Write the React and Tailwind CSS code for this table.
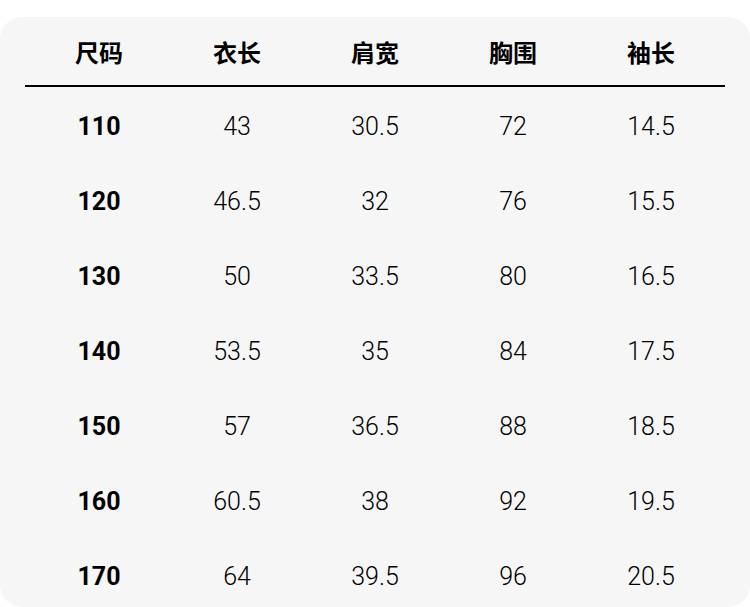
const headers = ['尺码', '衣长', '肩宽', '胸围', '袖长'];

const rows = [
  ['110', '43', '30.5', '72', '14.5'],
  ['120', '46.5', '32', '76', '15.5'],
  ['130', '50', '33.5', '80', '16.5'],
  ['140', '53.5', '35', '84', '17.5'],
  ['150', '57', '36.5', '88', '18.5'],
  ['160', '60.5', '38', '92', '19.5'],
  ['170', '64', '39.5', '96', '20.5'],
];

const App = () => {
  return (
    <div className="w-[750px] h-[607px] bg-white pt-[17px] overflow-hidden">
      <div
        className="h-[590px] bg-[#f6f6f6] rounded-[22px] px-[25px] text-black"
        style={{ fontFamily: 'Roboto, "Noto Sans CJK SC", sans-serif' }}
      >
        <div className="grid grid-cols-5 h-[68px] pt-[6px] px-[5px] items-center">
          {headers.map((h) => (
            <div key={h} className="text-center text-[24px] font-bold">
              {h}
            </div>
          ))}
        </div>
        <div className="h-[2px] bg-black" />
        <div className="px-[5px] pt-[2px]">
          {rows.map((r) => (
            <div key={r[0]} className="grid grid-cols-5 h-[75px] items-center">
              {r.map((v, i) => (
                <div
                  key={i}
                  className={
                    i === 0
                      ? 'text-center text-[25px] font-bold'
                      : 'text-center text-[25px] font-light'
                  }
                >
                  {v}
                </div>
              ))}
            </div>
          ))}
        </div>
      </div>
    </div>
  );
};

export default App;
